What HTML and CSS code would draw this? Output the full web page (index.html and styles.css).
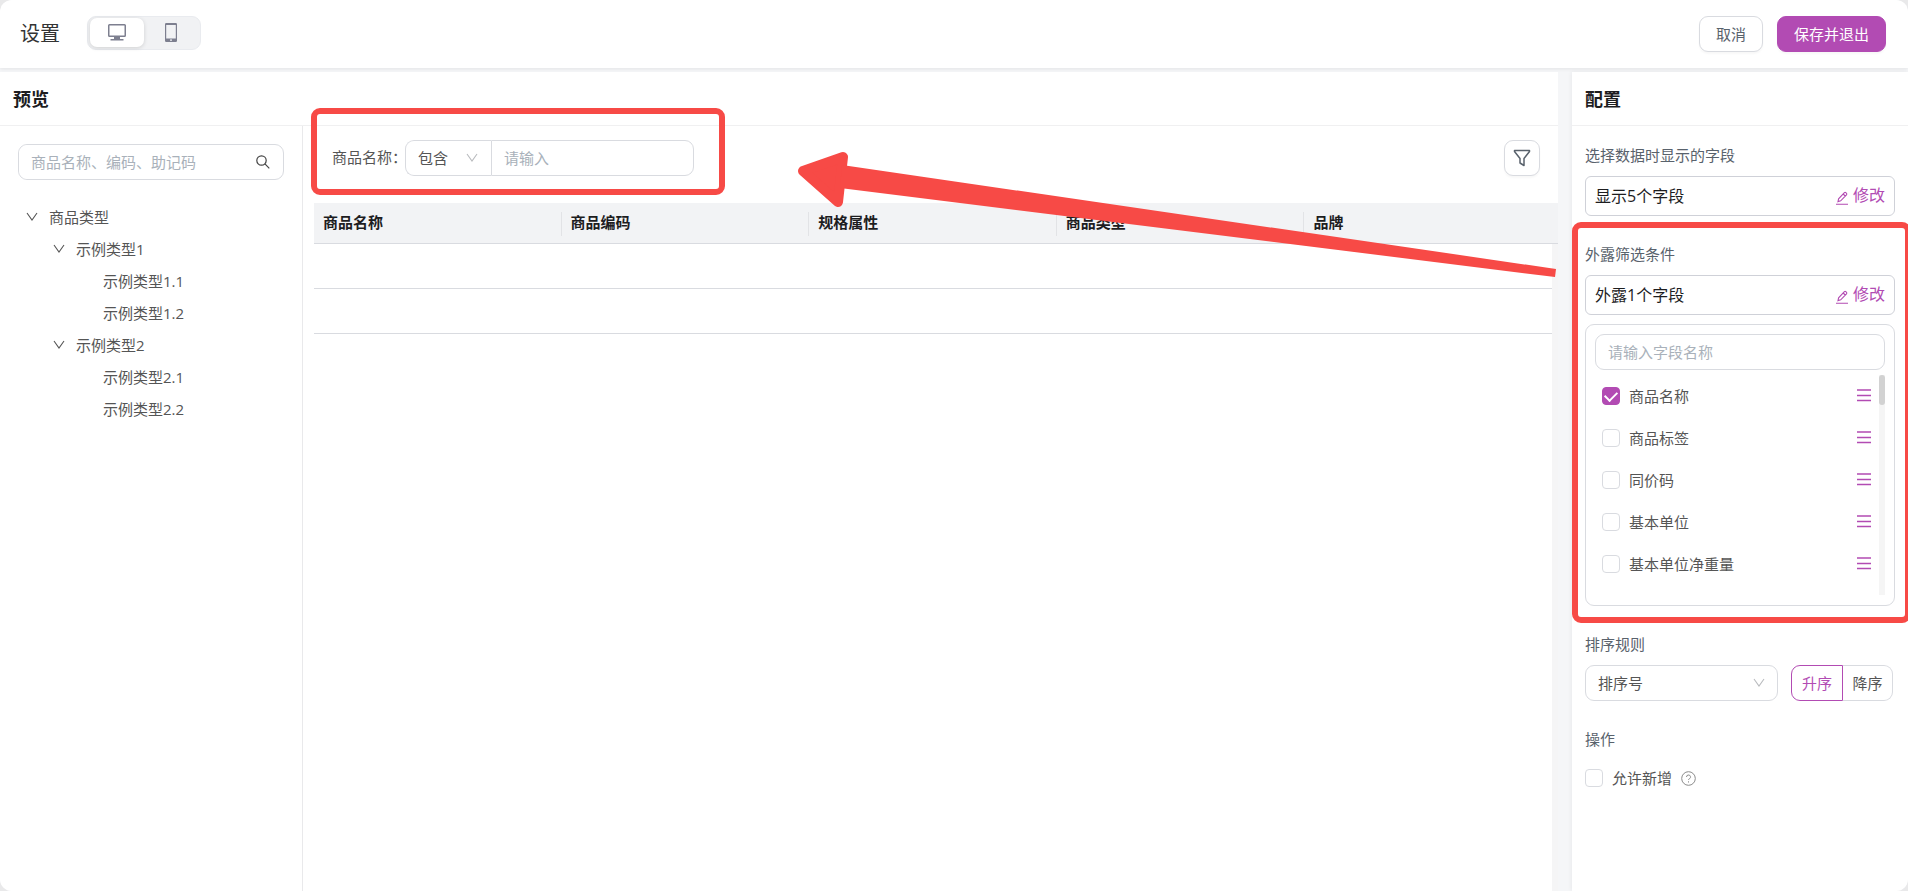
FILE: index.html
```html
<!DOCTYPE html>
<html lang="zh-CN">
<head>
    <meta charset="UTF-8">
    <meta name="viewport" content="width=device-width, initial-scale=1.0">
    <title>设置</title>
    <link rel="stylesheet" href="styles.css">
</head>
<body>
    <!-- shared icons -->
    <svg class="icon-defs" aria-hidden="true">
        <symbol id="icon-down" viewBox="0 0 12 12">
            <path d="M1 2l5 7 5-7" fill="none" stroke="currentColor" stroke-width="1.1"/>
        </symbol>
        <symbol id="icon-drag" viewBox="0 0 14 14">
            <path d="M0 1h14M0 6.500h14M0 11.500h14" fill="none" stroke="currentColor" stroke-width="1.4"/>
        </symbol>
        <symbol id="icon-edit" viewBox="0 0 12 14">
            <path d="M0 13.3h12M2 10.6l.6-2.8 5.8-6.1a1 1 0 0 1 1.4 0l.7.7a1 1 0 0 1 0 1.4L4.7 9.8zM7.2 3l2 2" fill="none" stroke="currentColor" stroke-width="1.1"/>
        </symbol>
    </svg>

    <div class="app">
        <header class="header">
            <h1>设置</h1>
            <div class="device-switch">
                <button type="button" class="device active" aria-label="电脑端">
                    <svg width="18" height="17" viewBox="0 0 18 17"><path d="M0 1.5A1.5 1.5 0 0 1 1.500 0h15A1.500 1.500 0 0 1 18 1.500v10a1.500 1.500 0 0 1-1.500 1.500H12v2h3.500v1.500h-13V15H6v-2H1.500A1.500 1.500 0 0 1 0 11.500zM1.500 1.500v10h15v-10z" fill="#7d7f8f" fill-rule="evenodd"/></svg>
                </button>
                <button type="button" class="device" aria-label="手机端">
                    <svg width="12" height="19" viewBox="0 0 12 19"><path d="M1.200 0h9.600A1.200 1.200 0 0 1 12 1.200v16.600a1.200 1.200 0 0 1-1.200 1.200H1.200A1.200 1.200 0 0 1 0 17.800V1.200A1.200 1.200 0 0 1 1.200 0zM1.200 2v13.500h9.600V2zM5 16.500v1.300h2v-1.300z" fill="#7d7f8f" fill-rule="evenodd"/></svg>
                </button>
            </div>
            <div class="header-actions">
                <button type="button" class="btn">取消</button>
                <button type="button" class="btn btn-primary">保存并退出</button>
            </div>
        </header>

        <div class="body">
            <section class="preview">
                <h2 class="panel-title">预览</h2>
                <div class="preview-content">
                    <aside class="sidebar">
                        <div class="search">
                            <input type="text" placeholder="商品名称、编码、助记码" aria-label="搜索商品">
                            <svg width="14" height="14" viewBox="0 0 14 14"><path d="M9.200 9.200L13.300 13.300M10.200 5.500a4.700 4.700 0 1 1-9.400 0 4.700 4.700 0 0 1 9.400 0z" fill="none" stroke="#444" stroke-width="1.200"/></svg>
                        </div>
                        <ul class="tree">
                            <li><svg class="arrow"><use href="#icon-down"/></svg>商品类型</li>
                            <li class="level-2"><svg class="arrow"><use href="#icon-down"/></svg>示例类型1</li>
                            <li class="level-3">示例类型1.1</li>
                            <li class="level-3">示例类型1.2</li>
                            <li class="level-2"><svg class="arrow"><use href="#icon-down"/></svg>示例类型2</li>
                            <li class="level-3">示例类型2.1</li>
                            <li class="level-3">示例类型2.2</li>
                        </ul>
                    </aside>

                    <main class="main">
                        <div class="filter-bar">
                            <div class="filter-item">
                                <label for="nameFilter">商品名称：</label>
                                <div class="input-group">
                                    <div class="select-box">
                                        <select aria-label="条件">
                                            <option>包含</option>
                                        </select>
                                        <svg class="caret"><use href="#icon-down"/></svg>
                                    </div>
                                    <input type="text" id="nameFilter" placeholder="请输入">
                                </div>
                                <div class="mark mark-filter"></div>
                            </div>
                            <button type="button" class="btn btn-icon" aria-label="筛选">
                                <svg width="18" height="18" viewBox="0 0 18 18"><path d="M1.500 1.500h15v1L11 9.500v7l-4-2.500V9.500l-5.500-7z" fill="none" stroke="#59626c" stroke-width="1.500" stroke-linejoin="round"/></svg>
                            </button>
                        </div>
                        <div class="table-area">
                            <table>
                                <thead>
                                    <tr>
                                        <th>商品名称</th>
                                        <th>商品编码</th>
                                        <th>规格属性</th>
                                        <th>商品类型</th>
                                        <th>品牌</th>
                                    </tr>
                                </thead>
                                <tbody>
                                    <tr><td></td><td></td><td></td><td></td><td></td></tr>
                                    <tr><td></td><td></td><td></td><td></td><td></td></tr>
                                </tbody>
                            </table>
                            <div class="table-scroll"></div>
                        </div>
                    </main>
                </div>
                <svg class="mark-arrow" width="762" height="140" viewBox="0 0 762 140">
                    <path d="M7 28L47 14L42 59Z" fill="#f74a46" stroke="#f74a46" stroke-width="10" stroke-linejoin="round"/>
                    <path d="M46 22L760 126L759 134L44 45Z" fill="#f74a46"/>
                </svg>
            </section>

            <section class="config">
                <h2 class="panel-title">配置</h2>
                <div class="config-content">
                    <h3>选择数据时显示的字段</h3>
                    <div class="field-box">
                        <span>显示5个字段</span>
                        <button type="button" class="edit"><svg><use href="#icon-edit"/></svg>修改</button>
                    </div>

                    <div class="exposed">
                        <h3>外露筛选条件</h3>
                        <div class="field-box">
                            <span>外露1个字段</span>
                            <button type="button" class="edit"><svg><use href="#icon-edit"/></svg>修改</button>
                        </div>
                        <div class="field-card">
                            <input type="text" placeholder="请输入字段名称" aria-label="字段名称">
                            <div class="field-scroll">
                                <ul class="field-list">
                                    <li><label><input type="checkbox" checked>商品名称</label><svg><use href="#icon-drag"/></svg></li>
                                    <li><label><input type="checkbox">商品标签</label><svg><use href="#icon-drag"/></svg></li>
                                    <li><label><input type="checkbox">同价码</label><svg><use href="#icon-drag"/></svg></li>
                                    <li><label><input type="checkbox">基本单位</label><svg><use href="#icon-drag"/></svg></li>
                                    <li><label><input type="checkbox">基本单位净重量</label><svg><use href="#icon-drag"/></svg></li>
                                </ul>
                                <div class="track"><div class="thumb"></div></div>
                            </div>
                        </div>
                        <div class="mark mark-exposed"></div>
                    </div>

                    <h3>排序规则</h3>
                    <div class="sort-row">
                        <div class="select-box sort-select">
                            <select aria-label="排序字段">
                                <option>排序号</option>
                            </select>
                            <svg class="caret"><use href="#icon-down"/></svg>
                        </div>
                        <div class="sort-order">
                            <button type="button" class="active">升序</button>
                            <button type="button">降序</button>
                        </div>
                    </div>

                    <h3 class="action-title">操作</h3>
                    <div class="allow-row">
                        <label><input type="checkbox">允许新增</label>
                        <svg width="15" height="15" viewBox="0 0 15 15" fill="none" stroke="#8b8b8b"><circle cx="7.500" cy="7.500" r="6.800"/><path d="M5.500 6a2 2 0 1 1 3 1.700c-.7.400-1 .7-1 1.300M7.500 10.300v1.200"/></svg>
                    </div>
                </div>
            </section>
        </div>
    </div>
</body>
</html>
```

FILE: styles.css
```css
* {
    box-sizing: border-box;
}
body {
    margin: 0;
    background-color: #e9e9ea;
    font-family: "Open Sans", "Noto Sans CJK SC", sans-serif;
    font-size: 15px;
    line-height: 24px;
    color: #555;
}
h1, h2, h3, ul {
    margin: 0;
    padding: 0;
}
ul {
    list-style: none;
}
input, select, button {
    font: inherit;
    color: inherit;
}
input::placeholder {
    color: #a9b1ba;
    opacity: 1;
}
input[type="text"] {
    height: 36px;
    min-width: 0;
    padding: 0 12px;
    border: 1px solid #d9dbe0;
    border-radius: 9px;
    background: #fff;
}
input[type="checkbox"] {
    appearance: none;
    display: grid;
    place-items: center;
    width: 18px;
    height: 18px;
    margin: 0;
    border: 1px solid #d9dbe0;
    border-radius: 4px;
    background: #fff;
}
input[type="checkbox"]:checked {
    background: #b24bb3;
    border-color: #b24bb3;
}
input[type="checkbox"]:checked::after {
    content: "";
    width: 6px;
    height: 10px;
    margin-bottom: 3px;
    border-right: 2px solid #fff;
    border-bottom: 2px solid #fff;
    transform: rotate(45deg);
}
.icon-defs {
    display: none;
}
.app {
    display: flex;
    flex-direction: column;
    min-height: 100vh;
    background: #f5f6f8;
    border-radius: 12px;
    overflow: hidden;
}

/* header */
.header {
    display: flex;
    align-items: center;
    height: 68px;
    padding: 0 22px 0 20px;
    background: #fff;
    box-shadow: 0 1px 4px rgba(0, 0, 0, 0.08);
}
.header h1 {
    font-size: 20px;
    font-weight: 400;
    color: #333;
}
.device-switch {
    display: flex;
    margin-left: 27px;
    margin-bottom: 2px;
    padding: 1px 2px 2px;
    border: 1px solid #e9ebef;
    border-radius: 9px;
    background: #f1f2f4;
}
.device {
    display: grid;
    place-items: center;
    width: 54px;
    height: 29px;
    padding: 0;
    border: none;
    border-radius: 7px;
    background: none;
}
.device.active {
    background: #fff;
    box-shadow: 0 1px 4px rgba(0, 0, 0, 0.14);
}
.header-actions {
    display: flex;
    gap: 14px;
    margin-left: auto;
    margin-bottom: 1px;
}
.btn {
    height: 36px;
    padding: 0 16px;
    border: 1px solid #d9dbe0;
    border-radius: 9px;
    background: #fff;
    color: #59626c;
    box-shadow: 0 2px 2px rgba(0, 0, 0, 0.03);
}
.btn-primary {
    border-color: #b24bb3;
    background: #b24bb3;
    color: #fff;
}
.btn-icon {
    display: grid;
    place-items: center;
    width: 36px;
    padding: 0;
}

/* two panels */
.body {
    flex: 1;
    display: flex;
    gap: 14px;
    padding-top: 4px;
}
.panel-title {
    height: 54px;
    padding: 0 13px;
    border-bottom: 1px solid #f0f0f1;
    font-size: 18px;
    font-weight: 700;
    line-height: 54px;
    color: #1d1d1f;
}
.preview {
    position: relative;
    flex: 1;
    display: flex;
    flex-direction: column;
    min-width: 0;
    background: #fff;
}
.preview-content {
    flex: 1;
    display: flex;
}
.sidebar {
    width: 303px;
    padding: 18px;
    border-right: 1px solid #e9e9eb;
}
.search {
    display: flex;
    align-items: center;
    height: 36px;
    padding-right: 13px;
    border: 1px solid #d9dbe0;
    border-radius: 9px;
}
.search input[type="text"] {
    flex: 1;
    height: 34px;
    border: none;
}
.tree {
    margin-top: 21px;
}
.tree li {
    display: flex;
    align-items: center;
    gap: 11px;
    height: 32px;
    padding-left: 8px;
}
.tree .level-2 {
    padding-left: 35px;
}
.tree .level-3 {
    padding-left: 85px;
}
.arrow {
    width: 12px;
    height: 12px;
}
.main {
    flex: 1;
    display: flex;
    flex-direction: column;
    min-width: 0;
    padding-left: 11px;
}
.filter-bar {
    display: flex;
    justify-content: space-between;
    padding: 14px 18px 27px;
}
.filter-item {
    position: relative;
    display: flex;
    align-items: center;
}
.filter-item > label {
    width: 73px;
    padding-bottom: 2px;
    white-space: nowrap;
}
.input-group {
    display: flex;
}
.select-box {
    display: grid;
    align-items: center;
    width: 86px;
}
.select-box > * {
    grid-area: 1 / 1;
}
.select-box select {
    appearance: none;
    width: 100%;
    height: 36px;
    padding: 0 12px;
    border: 1px solid #d9dbe0;
    border-radius: 9px;
    background: #fff;
}
.caret {
    justify-self: end;
    width: 12px;
    height: 12px;
    margin-right: 13px;
    color: #b9bbbe;
    pointer-events: none;
}
.input-group select {
    border-right: none;
    border-radius: 9px 0 0 9px;
}
.input-group input[type="text"] {
    width: 203px;
    border-radius: 0 9px 9px 0;
}

/* table */
.table-area {
    flex: 1;
    display: grid;
    grid-template-columns: 1fr 6px;
    background: linear-gradient(#f2f3f5 40px, #fff 40px);
}
table {
    width: 100%;
    align-self: start;
    table-layout: fixed;
    border-collapse: separate;
    border-spacing: 0;
}
th {
    height: 41px;
    padding: 0;
    border-bottom: 1px solid #d9dbe0;
    background: #f2f3f5;
    font-weight: 700;
    text-align: left;
    color: #1d1d1f;
}
th::before {
    content: "";
    display: inline-block;
    width: 1px;
    height: 24px;
    margin-left: -1px;
    margin-right: 9px;
    vertical-align: middle;
    background: #e2e3e6;
}
th:first-child::before {
    background: none;
}
td {
    height: 45px;
    padding: 0;
    border-bottom: 1px solid #d9dbe0;
}
.table-scroll {
    margin-top: 40px;
    border-top: 1px solid #d9dbe0;
    background: #f5f5f6;
}

/* config */
.config {
    width: 336px;
    background: #fff;
    box-shadow: -1px 0 4px rgba(0, 0, 0, 0.05);
}
.config-content {
    padding: 17px 13px;
}
.config h3 {
    margin-bottom: 9px;
    font-size: 15px;
    font-weight: 400;
    color: #59626c;
}
.field-box {
    display: flex;
    align-items: center;
    justify-content: space-between;
    height: 40px;
    padding: 0 9px;
    border: 1px solid #cfd1d8;
    border-radius: 6px;
    font-size: 16px;
    color: #1d1d1f;
}
.edit {
    display: flex;
    align-items: center;
    gap: 5px;
    padding: 0 0 2px;
    border: none;
    background: none;
    color: #b24bb3;
}
.edit svg {
    width: 12px;
    height: 14px;
    margin-top: 6px;
}
.exposed {
    position: relative;
    margin: 26px 0;
}
.field-card {
    margin-top: 9px;
    height: 282px;
    padding: 9px;
    border: 1px solid #d9dbe0;
    border-radius: 9px;
}
.field-card > input[type="text"] {
    display: block;
    width: 100%;
}
.field-scroll {
    display: flex;
    justify-content: space-between;
    height: 220px;
    margin-top: 5px;
}
.field-list {
    flex: 1;
    padding: 0 8px 0 7px;
}
.field-list li {
    display: flex;
    align-items: center;
    justify-content: space-between;
    height: 42px;
}
.field-list svg {
    width: 14px;
    height: 14px;
    color: #b24bb3;
}
.field-list label, .allow-row label {
    display: flex;
    align-items: center;
    gap: 9px;
}
.track {
    width: 6px;
    background: #f5f5f5;
}
.thumb {
    height: 30px;
    border-radius: 3px;
    background: #d2d2d2;
}
.sort-row {
    display: flex;
    justify-content: space-between;
    padding-right: 2px;
}
.sort-select {
    width: 193px;
}
.sort-order {
    display: flex;
}
.sort-order button {
    width: 50px;
    height: 36px;
    padding: 0;
    border: 1px solid #d9dbe0;
    border-left: none;
    border-radius: 0 9px 9px 0;
    background: #fff;
}
.sort-order .active {
    width: 52px;
    border: 1px solid #b24bb3;
    border-radius: 9px 0 0 9px;
    color: #b24bb3;
}
.config .action-title {
    margin: 26px 0 15px;
}
.allow-row {
    display: flex;
    align-items: center;
    gap: 9px;
}

/* red marks drawn over the page */
.mark {
    position: absolute;
    border: 6px solid #f74a46;
    border-radius: 9px;
    pointer-events: none;
}
.mark-filter {
    top: -32px;
    right: -31px;
    bottom: -19px;
    left: -21px;
}
.mark-exposed {
    top: -20px;
    right: -16px;
    bottom: -17px;
    left: -13px;
}
.mark-arrow {
    position: absolute;
    top: 71px;
    right: 0;
    pointer-events: none;
}
```
